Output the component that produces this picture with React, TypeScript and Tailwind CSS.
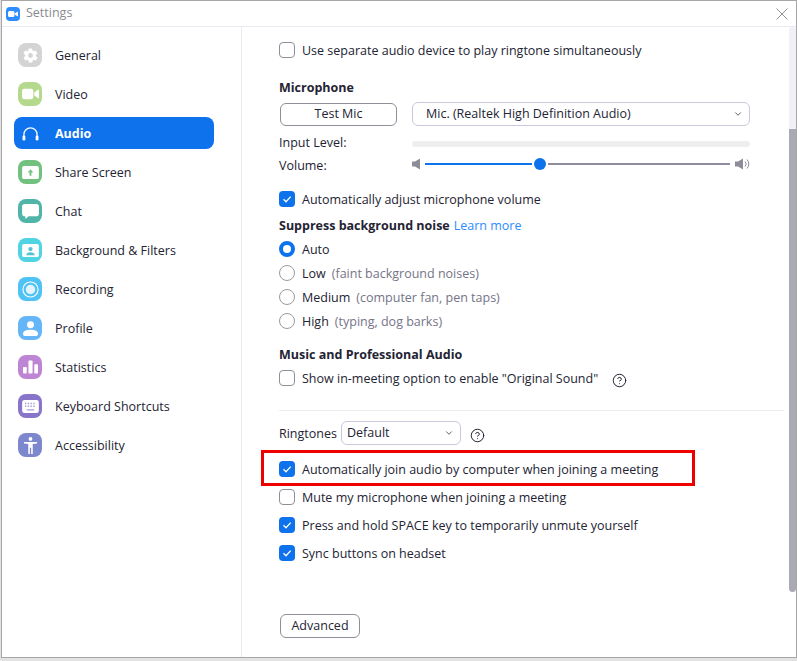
import type { ReactNode } from "react";
import { ChevronDown, CircleHelp } from "lucide-react";

type NavItem = {
  label: string;
  tile: string;
  icon: ReactNode;
  active?: boolean;
};

const navItems: NavItem[] = [
  {
    label: "General",
    tile: "bg-[#d4d4d4]",
    icon: (
      <svg viewBox="0 0 24 24" className="w-[17px] h-[17px]" fill="#fff">
        <path d="M19.4 13a7.6 7.6 0 0 0 0-2l2.1-1.6a.5.5 0 0 0 .1-.6l-2-3.5a.5.5 0 0 0-.6-.2l-2.5 1a7.300 7.300 0 0 0-1.700-1l-.4-2.700a.5.5 0 0 0-.5-.4h-4a.5.5 0 0 0-.5.4l-.4 2.700a7.300 7.300 0 0 0-1.700 1l-2.500-1a.5.5 0 0 0-.6.2l-2 3.500a.5.5 0 0 0 .1.6L4.600 11a7.600 7.600 0 0 0 0 2l-2.100 1.600a.5.5 0 0 0-.1.6l2 3.500c.1.2.4.3.6.2l2.500-1c.5.4 1.100.7 1.700 1l.4 2.700c0 .2.2.4.5.4h4c.3 0 .5-.2.5-.4l.4-2.700c.6-.3 1.200-.6 1.700-1l2.500 1c.2.1.5 0 .6-.2l2-3.500a.5.5 0 0 0-.1-.6L19.400 13zM12 15.500a3.500 3.500 0 1 1 0-7 3.500 3.500 0 0 1 0 7z" />
      </svg>
    ),
  },
  {
    label: "Video",
    tile: "bg-[#b4d98c]",
    icon: (
      <svg viewBox="0 0 18 12" className="w-[17px] h-[12px]" fill="#fff">
        <rect x="0" y="0.500" width="12" height="11" rx="2.500" />
        <path d="M13 4.500 17 1.500c.5-.3 1-.1 1 .5v8c0 .6-.5.8-1 .5l-4-3z" />
      </svg>
    ),
  },
  {
    label: "Audio",
    tile: "",
    active: true,
    icon: (
      <svg viewBox="0 0 18 16" className="w-[17px] h-[15px]" fill="none">
        <path d="M2 12V9a7 7 0 0 1 14 0v3" stroke="#fff" strokeWidth="1.300" />
        <rect x="0.500" y="10" width="3" height="5.500" rx="1.400" fill="#fff" />
        <rect x="14.500" y="10" width="3" height="5.500" rx="1.400" fill="#fff" />
      </svg>
    ),
  },
  {
    label: "Share Screen",
    tile: "bg-[#72c17e]",
    icon: (
      <svg viewBox="0 0 18 14" className="w-[17px] h-[13px]">
        <rect width="18" height="14" rx="2" fill="#fff" />
        <path d="M9 3.500 12 7H10V10.500H8V7H6z" fill="#72c17e" />
      </svg>
    ),
  },
  {
    label: "Chat",
    tile: "bg-[#4fb5a9]",
    icon: (
      <svg viewBox="0 0 18 16" className="w-[17px] h-[15px]" fill="#fff">
        <path d="M3 0h12a3 3 0 0 1 3 3v7a3 3 0 0 1-3 3H7l-3.500 3v-3H3a3 3 0 0 1-3-3V3a3 3 0 0 1 3-3z" />
      </svg>
    ),
  },
  {
    label: "Background & Filters",
    tile: "bg-[#50d3e3]",
    icon: (
      <svg viewBox="0 0 18 14" className="w-[17px] h-[13px]">
        <rect width="18" height="14" rx="2" fill="#fff" />
        <circle cx="9" cy="5.500" r="2.300" fill="#50c4d6" />
        <path d="M4.500 12c0-2 2-3 4.500-3s4.500 1 4.500 3z" fill="#50c4d6" />
      </svg>
    ),
  },
  {
    label: "Recording",
    tile: "bg-[#4fc3f5]",
    icon: (
      <svg viewBox="0 0 18 18" className="w-[17px] h-[17px]" fill="none">
        <circle cx="9" cy="9" r="8" stroke="#fff" strokeWidth="1.200" />
        <circle cx="9" cy="9" r="5" fill="#e3f4fd" />
      </svg>
    ),
  },
  {
    label: "Profile",
    tile: "bg-[#65b6f8]",
    icon: (
      <svg viewBox="0 0 16 16" className="w-[15px] h-[15px]" fill="#fff">
        <circle cx="8" cy="4" r="3.700" />
        <path d="M0 13.500C0 10.500 3.500 9.300 8 9.300s8 1.200 8 4.200c0 1.500-1 2.500-2.500 2.500h-11C1 16 0 15 0 13.500z" />
      </svg>
    ),
  },
  {
    label: "Statistics",
    tile: "bg-[#bd85d3]",
    icon: (
      <svg viewBox="0 0 16 14" className="w-[15px] h-[14px]" fill="#fff">
        <rect x="0" y="7" width="4" height="7" rx="0.800" />
        <rect x="5.800" y="0" width="4.400" height="14" rx="0.800" />
        <rect x="12" y="4" width="4" height="10" rx="0.800" />
      </svg>
    ),
  },
  {
    label: "Keyboard Shortcuts",
    tile: "bg-[#8874c8]",
    icon: (
      <svg viewBox="0 0 18 14" className="w-[17px] h-[13px]">
        <rect width="18" height="14" rx="2.500" fill="#fff" />
        <path
          d="M3 3h1.500v1.500H3zM6 3h1.500v1.500H6zM9 3h1.500v1.500H9zM12 3h1.500v1.500H12zM3 6h1.500v1.500H3zM6 6h1.500v1.500H6zM9 6h1.500v1.500H9zM12 6h1.500v1.500H12zM5 10h8v1.200H5z"
          fill="#a99ad8"
        />
      </svg>
    ),
  },
  {
    label: "Accessibility",
    tile: "bg-[#7d87ce]",
    icon: (
      <svg viewBox="0 0 16 18" className="w-[15px] h-[17px]" fill="#fff">
        <circle cx="8" cy="2" r="2" />
        <path d="M1 5.200h14v1.600l-4.600.7V18H8.700v-6.500H7.300V18H5.600V7.500L1 6.800z" />
      </svg>
    ),
  },
];

const Tick = () => (
  <svg viewBox="0 0 16 16" className="w-4 h-4" fill="none">
    <path d="M4.500 8.300 7 10.700 11.700 5.600" stroke="#fff" strokeWidth="1.300" />
  </svg>
);

const Check = ({ on, label }: { on?: boolean; label: string }) => (
  <div className="flex items-center h-6 gap-[7px]">
    {on ? (
      <span className="w-4 h-4 rounded-[4px] bg-[#0e72ed] shrink-0">
        <Tick />
      </span>
    ) : (
      <span className="w-4 h-4 rounded-[4px] border border-[#8f8f99] bg-white shrink-0" />
    )}
    <span className="pt-0.5">{label}</span>
  </div>
);

const Radio = ({ on, label, hint }: { on?: boolean; label: string; hint?: string }) => (
  <div className="flex items-center h-6 gap-[6px]">
    {on ? (
      <span className="w-4 h-4 mr-px rounded-full border-[4px] border-[#0e72ed] bg-white shrink-0" />
    ) : (
      <span className="w-4 h-4 mr-px rounded-full border border-[#9a9a9f] bg-white shrink-0" />
    )}
    <span className="pt-0.5">{label}</span>
    {hint && <span className="pt-0.5 text-[#747487]">{hint}</span>}
  </div>
);

const Speaker = ({ loud }: { loud?: boolean }) =>
  loud ? (
    <svg viewBox="0 0 15 12" className="w-[15px] h-3" fill="none">
      <path d="M0 3.500h3L8 .500v11l-5-3H0z" fill="#8d8d99" />
      <path d="M10 3.500a3.500 3.500 0 0 1 0 5M12 1.500a6.500 6.500 0 0 1 0 9" stroke="#8d8d99" strokeWidth="1" />
    </svg>
  ) : (
    <svg viewBox="0 0 8 12" className="w-2 h-3 mr-px" fill="#8d8d99">
      <path d="M0 3.500h3L8 .500v11l-5-3H0z" />
    </svg>
  );

export default function App() {
  return (
    <div
      className="w-[797px] h-[661px] bg-[#e2e2e2] pl-px overflow-hidden text-[#232333] text-[12.5px]"
      style={{ fontFamily: '"Open Sans", sans-serif' }}
    >
      <div className="w-[796px] h-[658px] border border-[#a6a6a6] bg-white flex flex-col">
        {/* title bar */}
        <div className="h-[26px] shrink-0 border-b border-[#e9e9f1] flex items-center pl-1 pr-2 gap-1.5">
          <span className="w-[14px] h-[14px] rounded-[4px] bg-[#2d8cff] flex items-center justify-center">
            <svg viewBox="0 0 10 6" className="w-[10px] h-[6px]" fill="#fff">
              <rect width="6.500" height="6" rx="1.500" />
              <path d="M7 2.300 10 .500v5L7 3.700z" />
            </svg>
          </span>
          <span className="text-[#8a8a90] flex-1">Settings</span>
          <svg viewBox="0 0 12 12" className="w-3 h-3" fill="none">
            <path d="M.5.500l11 11M11.500.500l-11 11" stroke="#777" strokeWidth="0.800" />
          </svg>
        </div>

        <div className="flex-1 flex min-h-0">
          {/* sidebar */}
          <div className="w-[240px] shrink-0 border-r border-[#e9e9f1] pl-3 pt-3">
            <div className="flex flex-col gap-[7px]">
              {navItems.map((item) => (
                <div
                  key={item.label}
                  className={
                    item.active
                      ? "w-[200px] h-8 rounded-lg bg-[#0e72ed] text-white font-bold flex items-center pl-1 gap-[13px]"
                      : "w-[200px] h-8 flex items-center pl-1 gap-[13px]"
                  }
                >
                  <span
                    className={`w-6 h-6 rounded-[8px] shrink-0 flex items-center justify-center ${item.tile}`}
                  >
                    {item.icon}
                  </span>
                  <span className="pt-0.5">{item.label}</span>
                </div>
              ))}
            </div>
          </div>

          {/* settings */}
          <div className="flex-1 min-w-0 pl-[37px] pt-[11px] flex flex-col">
            <Check label="Use separate audio device to play ringtone simultaneously" />

            <div className="mt-[13px] h-6 pt-0.5 flex items-center font-bold">Microphone</div>
            <div className="mt-[3px] w-[471px] flex items-center justify-between h-6">
              <div className="ml-px w-[117px] h-[23px] border border-[#8f8f99] rounded-md flex items-center justify-center">
                Test Mic
              </div>
              <div className="w-[338px] h-6 border border-[#c9c9dc] rounded-md flex items-center justify-between pl-[13px] pr-1.5">
                <span>Mic. (Realtek High Definition Audio)</span>
                <ChevronDown size={10} strokeWidth={2} color="#444" />
              </div>
            </div>

            <div className="mt-[5px] w-[471px] h-[22px] flex items-center">
              <span className="w-[133px] pt-0.5">Input Level:</span>
              <span className="flex-1 h-[6px] mt-[3px] rounded-full bg-[#eeeeee]" />
            </div>
            <div className="w-[471px] h-[22px] flex items-center">
              <span className="w-[133px] pt-1">Volume:</span>
              <div className="flex-1 flex items-center">
                <Speaker />
                <span className="ml-1 w-[107px] h-0.5 bg-[#0e72ed]" />
                <span className="mx-0.5 w-3 h-3 rounded-full bg-[#0e72ed] shrink-0" />
                <span className="w-[182px] h-0.5 bg-[#8d8d9f]" />
                <span className="ml-[5px]">
                  <Speaker loud />
                </span>
              </div>
            </div>

            <div className="mt-3">
              <Check on label="Automatically adjust microphone volume" />
            </div>

            <div className="mt-0.5 h-6 flex items-center gap-1">
              <span className="font-bold pt-0.5">Suppress background noise</span>
              <span className="text-[#2d8cff] pt-0.5">Learn more</span>
            </div>
            <Radio on label="Auto" />
            <Radio label="Low" hint="(faint background noises)" />
            <Radio label="Medium" hint="(computer fan, pen taps)" />
            <Radio label="High" hint="(typing, dog barks)" />

            <div className="mt-[9px] h-6 pt-0.5 flex items-center font-bold">Music and Professional Audio</div>
            <div className="flex items-center gap-[14px]">
              <Check label={'Show in-meeting option to enable "Original Sound"'} />
              <span className="mt-1">
                <CircleHelp size={15} strokeWidth={1.6} color="#232333" />
              </span>
            </div>

            <div className="mt-5 mr-[5px] h-px bg-[#ececf2]" />

            <div className="mt-[10px] h-6 flex items-center">
              <span className="w-[62px] pt-0.5">Ringtones</span>
              <div className="w-[120px] h-6 border border-[#c9c9dc] rounded-md flex items-center justify-between pl-[5px] pr-1.5">
                <span>Default</span>
                <ChevronDown size={10} strokeWidth={2} color="#444" />
              </div>
              <span className="ml-[9px] mt-1">
                <CircleHelp size={15} strokeWidth={1.6} color="#232333" />
              </span>
            </div>

            <div className="relative mt-3">
              <Check on label="Automatically join audio by computer when joining a meeting" />
              <div className="absolute -left-[18px] -top-[7px] w-[434px] h-[36px] border-[3px] border-[#ee0000]" />
            </div>
            <div className="mt-1">
              <Check label="Mute my microphone when joining a meeting" />
            </div>
            <div className="mt-1">
              <Check on label="Press and hold SPACE key to temporarily unmute yourself" />
            </div>
            <div className="mt-1">
              <Check on label="Sync buttons on headset" />
            </div>

            <div className="mt-[49px] ml-px w-20 h-6 border border-[#8f8f99] rounded-md flex items-center justify-center">
              Advanced
            </div>
          </div>

          {/* scrollbar */}
          <div className="w-[7px] shrink-0 flex flex-col">
            <div className="h-[102px] rounded-t-full bg-[#f0f0f6]" />
            <div className="h-[463px] rounded-b-sm bg-[#aaaab4]" />
          </div>
        </div>
      </div>
    </div>
  );
}
